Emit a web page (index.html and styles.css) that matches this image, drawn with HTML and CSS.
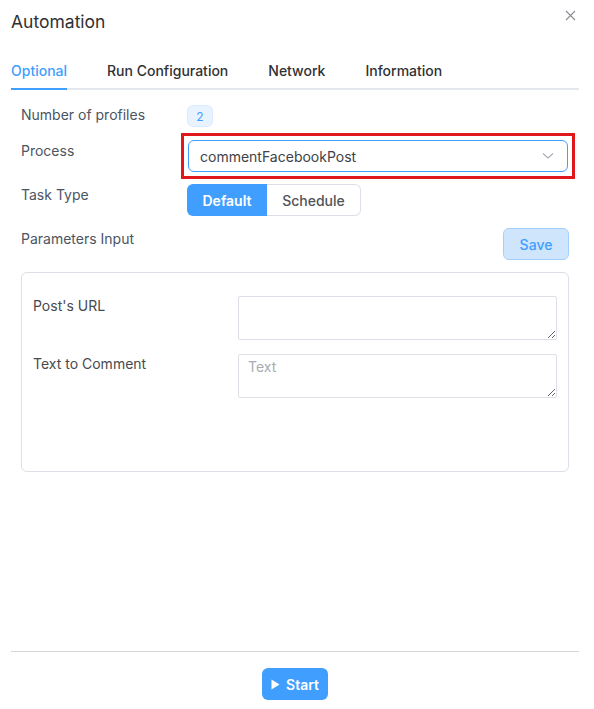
FILE: index.html
```html
<!DOCTYPE html>
<html>
<head>
<meta charset="utf-8">
<link rel="stylesheet" href="styles.css">
</head>
<body>
<div class="dialog">
  <div class="header">
    <div class="title">Automation</div>
    <button class="close" aria-label="Close">
      <svg width="11" height="11" viewBox="0 0 11 11"><path d="M1 1L10 10M10 1L1 10" stroke="#8a8d93" stroke-width="1.1" fill="none"/></svg>
    </button>
  </div>
  <div class="tabs">
    <div class="tab active">Optional</div>
    <div class="tab">Run Configuration</div>
    <div class="tab">Network</div>
    <div class="tab">Information</div>
  </div>
  <div class="form">
    <div class="row r-profiles">
      <div class="label">Number of profiles</div>
      <div class="badge">2</div>
    </div>
    <div class="row r-process">
      <div class="label">Process</div>
      <div class="highlight">
        <div class="select">
          <span>commentFacebookPost</span>
          <svg width="12" height="8" viewBox="0 0 12 8"><path d="M1 1.5L6 6L11 1.5" stroke="#a8abb2" stroke-width="1.1" fill="none"/></svg>
        </div>
      </div>
    </div>
    <div class="row r-task">
      <div class="label">Task Type</div>
      <div class="segmented">
        <div class="seg on">Default</div>
        <div class="seg">Schedule</div>
      </div>
    </div>
    <div class="row r-params">
      <div class="label">Parameters Input</div>
      <button class="save">Save</button>
    </div>
    <div class="params">
      <div class="prow">
        <div class="plabel">Post's URL</div>
        <textarea class="ta"></textarea>
      </div>
      <div class="prow">
        <div class="plabel">Text to Comment</div>
        <textarea class="ta" placeholder="Text"></textarea>
      </div>
    </div>
  </div>
  <div class="footer">
    <button class="start">
      <svg width="9" height="11" viewBox="0 0 9 11"><path d="M0.5 0.5L8.5 5.5L0.5 10.5Z" fill="#fff"/></svg>
      <span>Start</span>
    </button>
  </div>
</div>
</body>
</html>
```
FILE: styles.css
```css
* { box-sizing: border-box; }
html, body { margin: 0; padding: 0; background: #fff; }
body { font-family: Inter, "Noto Sans", sans-serif; color: #303133; }
.dialog { width: 594px; height: 709px; padding: 0 15px 0 11px; display: flex; flex-direction: column; }
.header { display: flex; justify-content: space-between; align-items: flex-start; height: 53px; padding-top: 11px; }
.title { font-size: 17.5px; color: #303133; line-height: 22px; }
.close { border: 0; background: none; padding: 0; margin: 0; width: 12px; height: 12px; margin-top: -1px; margin-right: 2px; display: flex; }
.tabs { display: flex; gap: 40px; border-bottom: 2px solid #e4e7ed; height: 37px; }
.tab { font-size: 14px; font-weight: 500; color: #303133; line-height: 36px; height: 37px; }
.tab.active { color: #409eff; border-bottom: 2px solid #409eff; margin-bottom: -2px; height: 37px; }
.form { padding: 0 10px; flex: 1; display: flex; flex-direction: column; }
.row { display: flex; align-items: flex-start; }
.label { width: 166px; font-size: 14px; color: #4b5563; line-height: 20px; flex: none; }
.r-profiles { margin-top: 15px; height: 22px; }
.r-profiles .label { line-height: 22px; margin-top: -1px; }
.badge { width: 26px; height: 22px; border-radius: 6px; background: #e8f3ff; border: 1px solid #d9ebff; color: #409eff; font-size: 12px; display: flex; align-items: center; justify-content: center; }
.r-process { margin-top: 6px; }
.r-process .label { margin-top: 8px; }
.highlight { flex: none; margin-left: -6px; border: 3px solid #e0171b; padding: 4px; width: 394px; height: 46px; }
.select { height: 32px; border: 1px solid #409eff; border-radius: 6px; display: flex; align-items: center; justify-content: space-between; padding: 0 13px 0 11px; font-size: 14px; color: #3e4247; }
.r-task { margin-top: 5px; }
.r-task .label { margin-top: 1px; }
.segmented { display: flex; height: 32px; }
.seg { font-size: 14px; font-weight: 600; display: flex; align-items: center; justify-content: center; }
.seg.on { width: 80px; background: #409eff; color: #fff; border-radius: 6px 0 0 6px; }
.seg:not(.on) { width: 94px; border: 1px solid #dcdfe6; border-left: 0; border-radius: 0 6px 6px 0; color: #505358; font-weight: 500; }
.r-params { margin-top: 12px; justify-content: space-between; height: 32px; }
.r-params .label { margin-top: 1px; }
.save { width: 66px; height: 32px; background: #cfe5fc; border: 1px solid #a3cffd; border-radius: 6px; color: #409eff; font-family: inherit; font-size: 14px; font-weight: 500; }
.params { margin-top: 12px; border: 1px solid #dcdfe6; border-radius: 6px; height: 200px; padding: 23px 11px 0 11px; display: flex; flex-direction: column; gap: 14px; }
.prow { display: flex; }
.plabel { width: 205px; font-size: 14px; color: #474a4f; line-height: 20px; margin-top: 0px; }
.ta { width: 319px; height: 44px; border: 1px solid #dcdfe6; border-radius: 2px; font-family: Inter, sans-serif; font-size: 14px; padding: 3px 9px; resize: vertical; display: block; margin-top: 0; }
.ta::placeholder { color: #a8abb2; }
.footer { border-top: 1px solid #d4d6db; height: 58px; margin-bottom: 0; display: flex; justify-content: center; padding-top: 16px; flex: none; }
.start { width: 66px; height: 32px; border: 0; border-radius: 6px; background: #409eff; color: #fff; font-family: inherit; font-size: 14px; font-weight: 600; display: flex; align-items: center; justify-content: center; gap: 6px; padding: 0; }
```
